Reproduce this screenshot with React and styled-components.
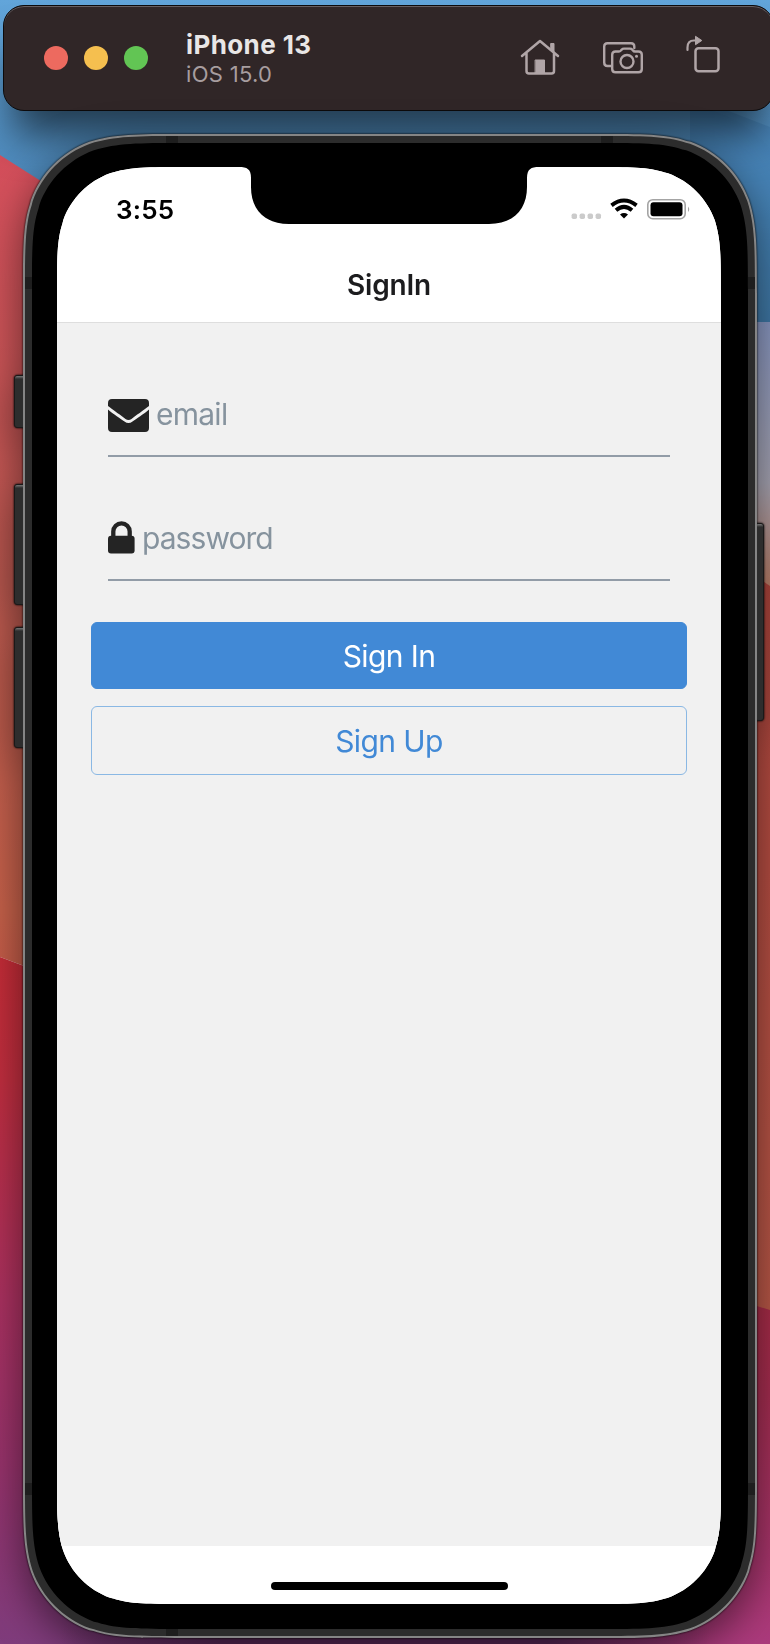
import React from "react";
import styled, { createGlobalStyle } from "styled-components";

const Global = createGlobalStyle`
  * { box-sizing: border-box; }
  body { margin: 0; overflow: hidden; font-family: Inter, "Liberation Sans", sans-serif; }
`;

/* Continuous-curvature rounded rectangle, usable in clip-path */
const squircle = (w, h, r) => {
  const a = 1.528665 * r, b = 1.088493 * r, c = 0.868407 * r, d = 0.669934 * r,
    e = 0.065496 * r, f = 0.631494 * r, g = 0.074911 * r, i = 0.372824 * r, j = 0.16906 * r;
  return `M${a} 0L${w - a} 0C${w - b} 0 ${w - c} 0 ${w - d} ${e}L${w - f} ${g}C${w - i} ${j} ${w - j} ${i} ${w - g} ${f}` +
    `C${w} ${c} ${w} ${b} ${w} ${a}L${w} ${h - a}C${w} ${h - b} ${w} ${h - c} ${w - e} ${h - d}L${w - g} ${h - f}` +
    `C${w - j} ${h - i} ${w - i} ${h - j} ${w - f} ${h - g}C${w - c} ${h} ${w - b} ${h} ${w - a} ${h}L${a} ${h}` +
    `C${b} ${h} ${c} ${h} ${d} ${h - e}L${f} ${h - g}C${i} ${h - j} ${j} ${h - i} ${g} ${h - f}` +
    `C0 ${h - c} 0 ${h - b} 0 ${h - a}L0 ${a}C0 ${b} 0 ${c} ${e} ${d}L${g} ${f}C${j} ${i} ${i} ${j} ${f} ${g}C${c} 0 ${b} 0 ${a} 0Z`;
};

const Desktop = styled.main`
  position: relative;
  width: 770px;
  height: 1644px;
  overflow: hidden;
  display: flex;
  flex-direction: column;
  align-items: flex-start;
  padding-top: 5px;
`;

const WallpaperSvg = styled.svg`
  position: absolute;
  inset: 0;
  z-index: -1;
`;

const Toolbar = styled.header`
  flex: none;
  width: 771px;
  height: 106px;
  margin-left: 3px;
  display: flex;
  align-items: center;
  padding: 0 53px 0 40px;
  border: 1px solid #0c0a0b;
  border-radius: 21px;
  background: #302627;
  box-shadow: inset 0 1px 0 #665e60, 0 34px 40px -10px rgba(0, 0, 0, 0.6);
`;

const Lights = styled.div`
  display: flex;
  gap: 16px;
`;

const Light = styled.span`
  width: 24px;
  height: 24px;
  border-radius: 50%;
  background: ${(p) => p.$color};
`;

const DeviceInfo = styled.div`
  margin-left: 38px;
  padding-top: 2px;
  flex: 1;
`;

const DeviceName = styled.div`
  color: #e9e6e6;
  font-size: 26px;
  line-height: 30px;
  font-weight: 700;
  letter-spacing: 0.4px;
  white-space: nowrap;
`;

const DeviceOs = styled.div`
  color: #a79d9f;
  font-size: 22px;
  line-height: 28px;
  letter-spacing: 0.3px;
`;

const Actions = styled.div`
  display: flex;
  align-items: flex-start;
  gap: 43px;
  height: 46px;
`;

const ActionButton = styled.button`
  display: flex;
  border: 0;
  background: none;
  padding: ${(p) => p.$drop}px 0 0;
`;

const Phone = styled.section`
  position: relative;
  flex: none;
  width: 734px;
  height: 1504px;
  margin: 23px 0 0 23px;
  filter: drop-shadow(0 0 1px #000) drop-shadow(0 14px 20px rgba(0, 0, 0, 0.5));
`;

const Shell = styled.div`
  width: ${(p) => p.$w}px;
  height: ${(p) => p.$h}px;
  padding: ${(p) => p.$pad || 0};
  background: ${(p) => p.$color};
  clip-path: path("${(p) => squircle(p.$w, p.$h, p.$r)}");
`;

const SideButton = styled.span`
  position: absolute;
  z-index: -1;
  ${(p) => (p.$right ? "right: -7px; width: 9px;" : "left: -9px; width: 12px;")}
  top: ${(p) => p.$top}px;
  height: ${(p) => p.$height}px;
  border-radius: 3px;
  border: 1px solid #1a1919;
  background: linear-gradient(#777 0, #2d2d2d 3px);
`;

const Antenna = styled.span`
  position: absolute;
  left: ${(p) => p.$x}px;
  top: ${(p) => p.$y}px;
  width: ${(p) => (p.$tall ? 7 : 12)}px;
  height: ${(p) => (p.$tall ? 12 : 7)}px;
  background: #1e1e1e;
`;

const Screen = styled.div`
  position: relative;
  height: 100%;
  display: flex;
  flex-direction: column;
  background: #fff;
`;

const NotchSvg = styled.svg`
  position: absolute;
  top: 0;
  left: 182px;
`;

const StatusBar = styled.div`
  height: 80px;
  padding: 27px 30px 0 59px;
  display: flex;
  justify-content: space-between;
`;

const Clock = styled.time`
  color: #000;
  font-size: 26px;
  line-height: 32px;
  font-weight: 600;
  letter-spacing: 0.2px;
`;

const NavBar = styled.div`
  height: 76px;
  padding-top: 21px;
  border-bottom: 1px solid #dedede;
  text-align: center;
  color: #1c1c1e;
  font-size: 28px;
  line-height: 34px;
  font-weight: 600;
  letter-spacing: -0.2px;
`;

const Form = styled.form`
  flex: 1;
  display: flex;
  flex-direction: column;
  padding: 59px 34px 0;
  background: #f1f1f1;
`;

const Field = styled.label`
  display: flex;
  align-items: center;
  gap: 7px;
  height: 75px;
  margin: 0 17px ${(p) => (p.$last ? 41 : 49)}px;
  padding-bottom: 7px;
  border-bottom: 2px solid #929ca7;
`;

const Input = styled.input`
  flex: 1;
  min-width: 0;
  height: 46px;
  padding: 0 0 3px;
  border: 0;
  outline: 0;
  background: transparent;
  font: 400 30px/42px Inter, sans-serif;
  letter-spacing: ${(p) => p.$spacing}px;
  &::placeholder { color: #86939e; opacity: 1; }
`;

const Button = styled.button`
  height: ${(p) => (p.$outline ? 69 : 67)}px;
  margin-bottom: 17px;
  padding: 0;
  border: 1px solid ${(p) => (p.$outline ? "#8ab8e4" : "#4189d6")};
  border-radius: 6px;
  background: ${(p) => (p.$outline ? "transparent" : "#4189d6")};
  color: ${(p) => (p.$outline ? "#4189d6" : "#fff")};
  font: 400 30px/36px Inter, sans-serif;
  letter-spacing: -0.6px;
`;

const HomeArea = styled.div`
  height: 58px;
  display: flex;
  justify-content: center;
  padding-top: 36px;
`;

const HomeIndicator = styled.span`
  width: 237px;
  height: 8px;
  border-radius: 4px;
  background: #000;
`;

const Wallpaper = () => (
  <WallpaperSvg width="770" height="1644" viewBox="0 0 770 1644">
    <defs>
      <linearGradient id="sky" x2="0" y2="1"><stop stopColor="#62a5da" /><stop offset=".5" stopColor="#4f8bbd" /><stop offset="1" stopColor="#42789f" /></linearGradient>
      <linearGradient id="coral" x2="0" y2="1"><stop stopColor="#d54f5c" /><stop offset=".45" stopColor="#bc5950" /><stop offset=".8" stopColor="#c46049" /><stop offset="1" stopColor="#c05046" /></linearGradient>
      <linearGradient id="berry" x2="0" y2="1"><stop stopColor="#c42c37" /><stop offset=".18" stopColor="#c02e3f" /><stop offset=".5" stopColor="#aa3160" /><stop offset=".75" stopColor="#96336c" /><stop offset="1" stopColor="#7f3c7c" /></linearGradient>
      <linearGradient id="rose" x2="0" y2="1"><stop stopColor="#ab2a3c" /><stop offset=".45" stopColor="#a52d50" /><stop offset="1" stopColor="#ab3a7c" /></linearGradient>
      <linearGradient id="dusk" x2="0" y2="1"><stop stopColor="#8896c0" /><stop offset=".6" stopColor="#a5a3b1" /><stop offset="1" stopColor="#c48269" /></linearGradient>
      <linearGradient id="brick" x2="0" y2="1"><stop stopColor="#b3423b" /><stop offset=".55" stopColor="#b54d42" /><stop offset="1" stopColor="#b85747" /></linearGradient>
      <linearGradient id="underside"><stop stopColor="#5a2858" stopOpacity="0" /><stop offset=".25" stopColor="#5a2858" /><stop offset=".75" stopColor="#5a2858" /><stop offset="1" stopColor="#5a2858" stopOpacity="0" /></linearGradient>
    </defs>
    <rect width="770" height="330" fill="url(#sky)" />
    <path d="M690 96L770 127V322H690Z" fill="#3672a8" opacity=".35" />
    <path d="M0 155L385 400V1100L0 957Z" fill="url(#coral)" />
    <path d="M0 957L24 966L385 1080V1644H0Z" fill="url(#berry)" />
    <path d="M385 322H770V590H385Z" fill="url(#dusk)" />
    <path d="M385 320L770 586V1315H385Z" fill="url(#brick)" />
    <path d="M385 1190L770 1310V1644H385Z" fill="url(#rose)" />
    <rect x="60" y="1600" width="650" height="44" fill="url(#underside)" />
  </WallpaperSvg>
);

const HomeIcon = () => (
  <svg width="40" height="36" viewBox="0 0 40 36" fill="none" stroke="#b0a5a7" strokeWidth="2.5" strokeLinecap="round" strokeLinejoin="round">
    <path d="M2 17L20 2L38 17M6.5 14V32Q6.500 34.500 9 34.500H31.500Q34 34.500 34 32V14" />
    <path d="M31 4.500H34V14L31 11Z" fill="#b0a5a7" strokeWidth="1" />
    <path d="M15.500 21H24.500V34H15.500Z" fill="#b0a5a7" strokeWidth="1" />
  </svg>
);

const CameraIcon = () => (
  <svg width="40" height="32" viewBox="0 0 40 32" fill="none" stroke="#b0a5a7" strokeWidth="2.4" strokeLinejoin="round" strokeLinecap="round">
    <path d="M8 24H4.500Q1.200 24 1.200 20.500V4.500Q1.200 1.200 4.500 1.200H28Q31.300 1.200 31.300 4.500V6" />
    <path d="M12 9.500H16Q17.500 9.500 18.300 8L19 7.400Q19.600 6.600 21 6.600H27Q28.400 6.600 29.200 7.600L30 8.500Q30.700 9.500 32 9.500H35.500Q38.800 9.500 38.800 12.800V27Q38.800 30.300 35.500 30.300H12.500Q9.200 30.300 9.200 27V12.800Q9.200 9.500 12.500 9.500" />
    <circle cx="24" cy="19.500" r="6.500" /><circle cx="33.500" cy="14.200" r="1.500" fill="#b0a5a7" stroke="none" />
  </svg>
);

const RotateIcon = () => (
  <svg width="34" height="38" viewBox="0 0 34 38" fill="none" stroke="#b0a5a7" strokeWidth="2.500">
    <rect x="9.500" y="13.300" width="23" height="23" rx="3" />
    <path d="M1.500 15V12.500Q1.500 5.500 8 5.500H11" strokeWidth="2.200" strokeLinecap="round" />
    <path d="M9.500 1.300L15.800 5.500L9.500 9.700Z" fill="#b0a5a7" strokeWidth="1" strokeLinejoin="round" />
  </svg>
);

const StatusIcons = () => (
  <svg width="120" height="32" viewBox="0 0 120 32">
    <g fill="#cbcbcb">{[0.6, 8.6, 16.6, 24.6].map((x) => <rect key={x} x={x} y="19.500" width="5.400" height="5.500" rx="1.800" />)}</g>
    <g fill="none" stroke="#000" strokeWidth="4">
      <path d="M40.500 11.300Q53 1.800 65.500 11.300" /><path d="M45 16.200Q53 9.500 61 16.200" />
    </g>
    <path d="M49 20.500Q53 17.700 57 20.500L53 24.500Z" />
    <rect x="76.800" y="5.700" width="37.400" height="19" rx="5" fill="none" stroke="#a4a4a4" strokeWidth="1.600" />
    <rect x="79.500" y="8.300" width="32" height="14" rx="3" />
    <path d="M117 12.500Q119.500 15.300 117 18Z" fill="#a4a4a4" />
  </svg>
);

const Notch = () => (
  <NotchSvg width="300" height="58" viewBox="0 0 300 58">
    <path d="M0 0C8 0 12 2 12 11V20C12 42 25 57 50 57H250C275 57 288 42 288 20V11C288 2 292 0 300 0Z" />
  </NotchSvg>
);

const MailIcon = () => (
  <svg width="41" height="33" viewBox="0 0 41 33" fill="#242424">
    <path d="M4 0H37Q41 0 41 4V7C36 11 27 17 23.500 20Q20.500 22 17.500 20C14 17 5 11 0 7V4Q0 0 4 0Z" />
    <path d="M0 10.500C5 15 13 20 16.500 22.500Q20.500 25.500 24.500 22.500C28 20 36 15 41 10.500V29Q41 33 37 33H4Q0 33 0 29Z" />
  </svg>
);

const LockIcon = () => (
  <svg width="27" height="37" viewBox="0 0 27 37">
    <path d="M5.300 17V10.500A8.200 8.200 0 0 1 21.700 10.500V17" fill="none" stroke="#242424" strokeWidth="4.300" />
    <rect y="14.800" width="26.600" height="17.800" rx="3" fill="#242424" />
  </svg>
);

export default function App() {
  return (
    <>
      <Global />
      <Desktop>
        <Wallpaper />
        <Toolbar>
          <Lights>
            <Light $color="#ed6a5f" />
            <Light $color="#f5bf4f" />
            <Light $color="#62c554" />
          </Lights>
          <DeviceInfo>
            <DeviceName>iPhone 13</DeviceName>
            <DeviceOs>iOS 15.0</DeviceOs>
          </DeviceInfo>
          <Actions>
            <ActionButton $drop={3.5} aria-label="Home"><HomeIcon /></ActionButton>
            <ActionButton $drop={6.5} aria-label="Screenshot"><CameraIcon /></ActionButton>
            <ActionButton $drop={0} aria-label="Rotate"><RotateIcon /></ActionButton>
          </Actions>
        </Toolbar>
        <Phone>
          <SideButton $top={241} $height={53} />
          <SideButton $top={350} $height={121} />
          <SideButton $top={493} $height={121} />
          <SideButton $right $top={389} $height={198} />
          <Shell $w={734} $h={1504} $r={105} $color="#858585" $pad="2px">
            <Shell $w={730} $h={1500} $r={103} $color="#2c2c2c" $pad="7px">
              <Shell $w={716} $h={1486} $r={98} $color="#000" $pad="24px 25px">
                <Shell $w={664} $h={1437} $r={84} $color="#fff">
                  <Screen>
                    <Notch />
                    <StatusBar><Clock>3:55</Clock><StatusIcons /></StatusBar>
                    <NavBar>SignIn</NavBar>
                    <Form>
                      <Field><MailIcon /><Input placeholder="email" aria-label="email" $spacing={-0.75} /></Field>
                      <Field $last><LockIcon /><Input type="password" placeholder="password" aria-label="password" $spacing={-0.95} /></Field>
                      <Button type="button">Sign In</Button>
                      <Button type="button" $outline>Sign Up</Button>
                    </Form>
                    <HomeArea><HomeIndicator /></HomeArea>
                  </Screen>
                </Shell>
              </Shell>
            </Shell>
          </Shell>
          <Antenna $x={143} $y={2} />
          <Antenna $x={578} $y={2} />
          <Antenna $tall $x={2} $y={143} />
          <Antenna $tall $x={725} $y={143} />
          <Antenna $tall $x={2} $y={1349} />
          <Antenna $tall $x={725} $y={1349} />
          <Antenna $x={143} $y={1495} />
        </Phone>
      </Desktop>
    </>
  );
}
